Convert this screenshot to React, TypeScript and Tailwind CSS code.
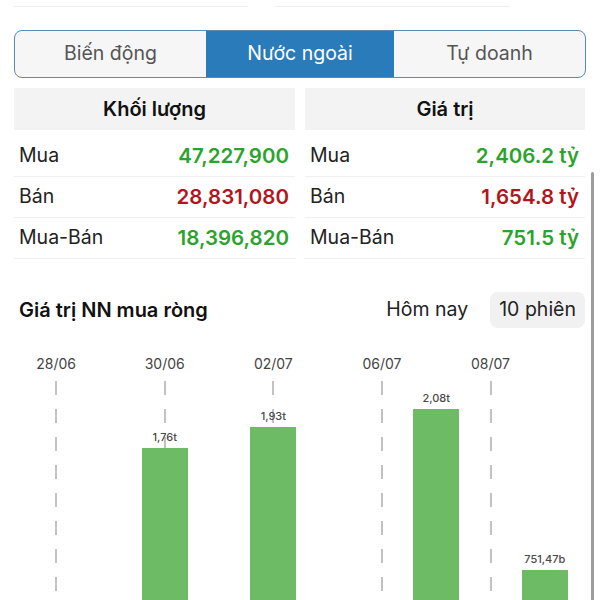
const TABS = ['Biến động', 'Nước ngoài', 'Tự doanh'];

const VOLUME = [
  { label: 'Mua', value: '47,227,900', color: 'text-[#2ba42e]' },
  { label: 'Bán', value: '28,831,080', color: 'text-[#b0161c]' },
  { label: 'Mua-Bán', value: '18,396,820', color: 'text-[#2ba42e]' },
];

const VALUE = [
  { label: 'Mua', value: '2,406.2 tỷ', color: 'text-[#2ba42e]' },
  { label: 'Bán', value: '1,654.8 tỷ', color: 'text-[#b0161c]' },
  { label: 'Mua-Bán', value: '751.5 tỷ', color: 'text-[#2ba42e]' },
];

// 10 sessions; only positive bars reach into the visible area
const SESSIONS: { date?: string; value?: number; label?: string }[] = [
  { date: '28/06' },
  {},
  { date: '30/06', value: 1.76, label: '1,76t' },
  {},
  { date: '02/07', value: 1.93, label: '1,93t' },
  {},
  { date: '06/07' },
  { value: 2.08, label: '2,08t' },
  { date: '08/07' },
  { value: 0.7515, label: '751,47b' },
];

const PX_PER_T = 121;

function StatTable({ title, rows }: { title: string; rows: typeof VOLUME }) {
  return (
    <div className="flex flex-col">
      <div className="h-[42px] flex items-center justify-center bg-[#f3f3f4] text-[20px] font-semibold text-[#111]">
        {title}
      </div>
      <div className="mt-[6px]">
        {rows.map(r => (
          <div key={r.label} className="h-[41px] flex items-center justify-between pl-[5px] pr-[6px] border-b border-[#f0f0f0]">
            <span className="text-[19.5px] text-[#222]">{r.label}</span>
            <span className={`text-[20.5px] font-semibold ${r.color}`}>{r.value}</span>
          </div>
        ))}
      </div>
    </div>
  );
}

export default function App() {
  return (
    <div className="relative w-[600px] h-[600px] overflow-hidden bg-white" style={{ fontFamily: 'Inter, "Noto Sans", sans-serif' }}>
      <div className="flex gap-[27px] pl-[14px] pt-[6px]">
        <div className="w-[234px] h-px bg-[#eeeeee]" />
        <div className="w-[235px] h-px bg-[#eeeeee]" />
      </div>

      <div className="mx-[14px] mt-[23px] h-[48px] flex rounded-[8px] border-[1.5px] border-[#5b8bb3] overflow-hidden bg-[#f6f6f7]">
        {TABS.map((t, i) => (
          <div
            key={t}
            className={
              i === 1
                ? 'w-[188px] flex items-center justify-center bg-[#2a7bba] text-white text-[19.5px]'
                : 'flex-1 flex items-center justify-center text-[#555] text-[19.5px]'
            }
          >
            {t}
          </div>
        ))}
      </div>

      <div className="mx-[14px] mt-[10px] grid grid-cols-[281px_280px] gap-[10px]">
        <StatTable title="Khối lượng" rows={VOLUME} />
        <StatTable title="Giá trị" rows={VALUE} />
      </div>

      <div className="mx-[14px] mt-[33px] h-[36px] flex items-center justify-between">
        <span className="pl-[5px] text-[20px] font-semibold text-[#111]">Giá trị NN mua ròng</span>
        <div className="flex items-center gap-[22px]">
          <span className="text-[19.5px] text-[#222]">Hôm nay</span>
          <span className="h-[36px] px-[9px] mr-[1px] flex items-center rounded-[8px] bg-[#f1f1f2] text-[19.5px] text-[#222]">10 phiên</span>
        </div>
      </div>

      <div className="ml-[29px] mt-[27px] w-[543px] grid grid-cols-10 h-[306px]">
        {SESSIONS.map((s, i) => (
          <div key={i} className="relative flex flex-col items-center">
            <div className="h-[16px] flex items-center text-[14px] text-[#444]">{s.date}</div>
            {s.date && (
              <div className="absolute top-[26px] bottom-0 left-1/2 -translate-x-1/2 w-[2px] bg-[repeating-linear-gradient(to_bottom,#c2c2c2_0_14px,transparent_14px_28px)]" />
            )}
            <div className="relative flex-1 w-full flex flex-col items-center justify-end">
              {s.value !== undefined && (
                <>
                  <span className="relative mb-[3px] text-[11px] font-medium text-[#4a4a4a]">{s.label}</span>
                  <div className="relative w-[46px] bg-[#6dbb65]" style={{ height: s.value * PX_PER_T }} />
                </>
              )}
            </div>
          </div>
        ))}
      </div>

      <div className="absolute left-[591px] top-[172px] w-[3px] h-[440px] rounded-full bg-[#9c9c9c]" />
    </div>
  );
}
